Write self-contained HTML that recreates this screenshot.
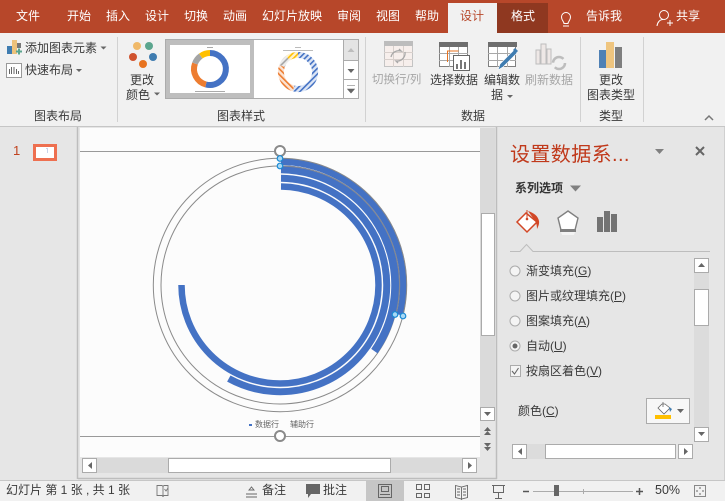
<!DOCTYPE html>
<html lang="zh">
<head>
<meta charset="utf-8">
<style>
html,body{margin:0;padding:0;}
body{width:725px;height:501px;overflow:hidden;position:relative;background:#E6E6E6;font-family:"Liberation Sans","Noto Sans CJK SC",sans-serif;font-size:12px;color:#333;}
.t{position:absolute;white-space:nowrap;line-height:16px;height:16px;}
.w{color:#fff;}
.g{color:#A6A6A6;}
.l{color:#3A3A3A;}
u{text-underline-offset:1px;}
svg{position:absolute;left:0;top:0;}
</style>
</head>
<body>
<svg width="725" height="501" viewBox="0 0 725 501">
<defs>
<pattern id="h1" width="4" height="4" patternUnits="userSpaceOnUse" patternTransform="rotate(45)"><rect width="4" height="4" fill="#DCE5F5"/><rect width="1.600" height="4" fill="#4472C4"/></pattern>
<pattern id="h2" width="4" height="4" patternUnits="userSpaceOnUse" patternTransform="rotate(-45)"><rect width="4" height="4" fill="#FBE3D3"/><rect width="1.600" height="4" fill="#ED7D31"/></pattern>
<pattern id="h3" width="4" height="4" patternUnits="userSpaceOnUse" patternTransform="rotate(45)"><rect width="4" height="4" fill="#EDEDED"/><rect width="1.600" height="4" fill="#A5A5A5"/></pattern>
<pattern id="h4" width="4" height="4" patternUnits="userSpaceOnUse" patternTransform="rotate(45)"><rect width="4" height="4" fill="#FFF2CC"/><rect width="1.600" height="4" fill="#FFC000"/></pattern>
</defs>
<!-- title bar -->
<rect width="725" height="33" fill="#B7472A"/>
<rect x="448" y="3" width="49" height="30" fill="#F1F1F1"/>
<rect x="497" y="3" width="51" height="30" fill="#8F3820"/>
<!-- bulb -->
<path d="M563 26h6M564 23.500c0-2-2.500-3-2.500-6.500a4.500 4.500 0 0 1 9 0c0 3.500-2.500 4.500-2.500 6.500z" fill="none" stroke="#fff" stroke-width="1"/>
<!-- person -->
<circle cx="664" cy="15" r="4.500" fill="none" stroke="#fff"/>
<path d="M657 26c.5-4 3-6.500 6-6.500M667 23h6M670 20v6" fill="none" stroke="#fff"/>
<!-- ribbon -->
<rect y="33" width="725" height="93" fill="#F1F1F1"/>
<rect y="126" width="725" height="1" fill="#C6C6C6"/>
<g stroke="#D2D2D2"><path d="M117.500 37v85M365.500 37v85M580.500 37v85M643.500 37v85"/></g>
<!-- add element icon -->
<rect x="7" y="46" width="5" height="8" fill="#3F7CB0"/>
<rect x="12" y="40" width="5" height="14" fill="#EDC27B"/>
<rect x="17" y="43" width="4" height="5" fill="#777"/>
<path d="M16 51.500h6M19 48.500v6" stroke="#5BA58E" stroke-width="2"/>
<!-- quick layout icon -->
<rect x="6.500" y="63.500" width="15" height="14" fill="#fff" stroke="#999"/>
<path d="M9.500 74v-5M11.500 74v-7M14 74v-7M16.500 74v-5M18.500 74v-3" stroke="#666"/>
<path d="M100.500 46.500h6l-3 3zM76 69h6l-3 3zM154 92.500h6l-3 3zM507 95h6l-3 3z" fill="#666"/>
<!-- colors -->
<circle cx="137" cy="46" r="4" fill="#F0B969"/><circle cx="149" cy="46" r="4" fill="#5BA58E"/>
<circle cx="133" cy="57" r="4" fill="#D0532F"/><circle cx="153" cy="57" r="4" fill="#3F7CB0"/>
<circle cx="143" cy="64" r="4" fill="#E8731F"/>
<!-- gallery -->
<rect x="165.500" y="39.500" width="193" height="59" fill="#fff" stroke="#ABABAB"/>
<rect x="166" y="40" width="88" height="58" fill="#BEBEBE"/>
<rect x="170" y="45" width="80" height="48" fill="#fff"/>
<g fill="none" stroke-width="6">
<path d="M210 53A16 16 0 1 1 205.900 84.500" stroke="#4472C4"/>
<path d="M205.900 84.500A16 16 0 0 1 195 63.500" stroke="#ED7D31"/>
<path d="M195 63.500A16 16 0 0 1 200.800 56" stroke="#A5A5A5"/>
<path d="M200.800 56A16 16 0 0 1 210 53" stroke="#FFC000"/>
</g>
<g stroke="#AAA" stroke-width="1"><path d="M207 47.500h6M195 91.500h30"/></g>
<g fill="none" stroke-width="6">
<path d="M298 55A17 17 0 1 1 293.600 88.400" stroke="url(#h1)"/>
<path d="M293.600 88.400A17 17 0 0 1 282 66" stroke="url(#h2)"/>
<path d="M282 66A17 17 0 0 1 288 58" stroke="url(#h3)"/>
<path d="M288 58A17 17 0 0 1 298 55" stroke="url(#h4)"/>
</g>
<g stroke="#BBB"><path d="M295 47.500h6M283 50.500h30"/></g>
<rect x="344" y="40" width="14" height="21" fill="#E4E4E4"/>
<path d="M343.500 39v60M344 60.500h14M344 79.500h14" stroke="#ABABAB"/>
<path d="M347.500 52l3.500-4 3.500 4z" fill="#BDBDBD"/>
<path d="M347.500 69h7l-3.500 4z" fill="#666"/>
<path d="M347 85.500h8M347.500 89h7l-3.500 4z" fill="#666" stroke="#666" stroke-width=".6"/>
<!-- switch row/col -->
<rect x="384.500" y="42.500" width="28" height="24" fill="#F7EFEC" stroke="#C4C4C4"/>
<rect x="384" y="41" width="29" height="5" fill="#BDBDBD"/>
<path d="M384 52.500h29M384 59.500h29M393.500 46v21M403.500 46v21" stroke="#D8D0CC"/>
<path d="M391 57a8 8 0 0 1 10-6l-2-2M405 52a8 8 0 0 1-9 9l2 2" fill="none" stroke="#A8A8A8" stroke-width="1.300"/>
<!-- select data -->
<rect x="439.500" y="43.500" width="28" height="23" fill="#fff" stroke="#808080"/>
<rect x="439" y="42" width="29" height="5" fill="#6E6E6E"/>
<path d="M439 53.500h29M439 60.500h29M449.500 47v20M458.500 47v20" stroke="#A8A8A8"/>
<path d="M447.500 62v-11h11" fill="none" stroke="#E8731F"/>
<rect x="453.500" y="55.500" width="16" height="15" fill="#fff" stroke="#666"/>
<path d="M456 69v-5h2v5zM460 69v-9h2v9zM464 69v-7h2v7z" fill="#777"/>
<!-- edit data -->
<rect x="488.500" y="43.500" width="27" height="23" fill="#fff" stroke="#808080"/>
<rect x="488" y="42" width="29" height="5" fill="#6E6E6E"/>
<path d="M488 53.500h28M488 60.500h28M497.500 47v20M507.500 47v20" stroke="#A8A8A8"/>
<path d="M498 70l2-6 14-14 3 3-14 14z" fill="#3F7CB0" stroke="#fff" stroke-width=".6"/>
<path d="M513 50l2-2 3 3-2 2z" fill="#3F7CB0"/>
<!-- refresh -->
<path d="M536 64V50h4v14zM541 64V44h5v20zM547 64V49h4v15z" fill="#EEE8E6" stroke="#BDBDBD"/>
<circle cx="559" cy="63" r="6" fill="none" stroke="#BDBDBD" stroke-width="2.500" stroke-dasharray="14 5"/>
<!-- change chart type -->
<rect x="599" y="50" width="7" height="18" fill="#4F81B5"/>
<rect x="606" y="42" width="8" height="26" fill="#EFC57F"/>
<rect x="615" y="47" width="7" height="21" fill="#7F7F7F"/>
<path d="M705 120l4-4 4 4" fill="none" stroke="#777" stroke-width="1.500"/>
<!-- left pane / frame -->
<rect y="127" width="78" height="354" fill="#E6E6E6"/>
<rect x="34.500" y="145.500" width="21" height="14" fill="#fff" stroke="#EE7050" stroke-width="3"/>
<path d="M46 148h2v5h-1v-4h-1z" fill="#C8D4EA"/>
<rect x="78" y="127" width="419" height="352" fill="#E6E6E6"/>
<path d="M77.500 127v352M78 478.500h419M496.500 127v352" stroke="#BDBDBD" stroke-width="1.500" fill="none"/>
<rect x="80" y="128" width="400" height="329" fill="#FCFCFC"/>
<!-- chart -->
<path d="M80 151.500h400M80 436.500h400" stroke="#999"/>
<circle cx="280" cy="285" r="119" fill="none" stroke="#8A8A8A"/>
<g fill="none" stroke="#4472C4">
<path d="M281 161.500A123.500 123.500 0 0 1 399.800 314.900" stroke-width="7"/>
<path d="M281 169.300A115.700 115.700 0 0 1 374.400 351.100" stroke-width="7.800"/>
<path d="M281 178.300A106.700 106.700 0 1 1 228.800 378.600" stroke-width="7"/>
<path d="M281 186.500A98.500 98.500 0 1 1 181.500 285" stroke-width="6.500"/>
</g>
<circle cx="280" cy="285" r="126.700" fill="none" stroke="#8A8A8A"/>
<path d="M281 166A119 119 0 0 1 396 314" fill="none" stroke="#838894" stroke-width="1.200"/>
<circle cx="280" cy="151" r="5" fill="#fff" stroke="#8A8A8A" stroke-width="2"/>
<circle cx="280" cy="436" r="5" fill="#fff" stroke="#8A8A8A" stroke-width="2"/>
<g fill="#A8D8F5" stroke="#1A8AD4" stroke-width="1.200">
<circle cx="280" cy="158.500" r="2.800"/><circle cx="280" cy="166" r="2.800"/>
<circle cx="395" cy="314.500" r="2.800"/><circle cx="403" cy="316" r="2.800"/>
</g>
<rect x="249" y="424" width="3" height="2" fill="#4472C4"/>
<!-- editor scrollbars -->
<rect x="480" y="128" width="15" height="279" fill="#DADADA"/>
<rect x="481.500" y="213.500" width="13" height="122" fill="#fff" stroke="#ABABAB"/>
<rect x="480.500" y="407.500" width="14" height="13" fill="#fff" stroke="#ABABAB"/>
<path d="M484 412h7l-3.500 4z" fill="#666"/>
<path d="M484 431l3.500-4 3.500 4zM484 435l3.500-4 3.500 4zM484 443h7l-3.500 4zM484 447h7l-3.500 4z" fill="#666"/>
<rect x="82" y="458" width="395" height="15" fill="#DADADA"/>
<rect x="82.500" y="458.500" width="14" height="14" fill="#fff" stroke="#ABABAB"/>
<path d="M92 462v7l-4-3.500z" fill="#666"/>
<rect x="168.500" y="458.500" width="222" height="14" fill="#fff" stroke="#ABABAB"/>
<rect x="462.500" y="458.500" width="14" height="14" fill="#fff" stroke="#ABABAB"/>
<path d="M468 462v7l4-3.500z" fill="#666"/>
<!-- panel -->
<path d="M655 149h9l-4.500 5z" fill="#808080"/>
<path d="M696 147l8 8M704 147l-8 8" stroke="#666" stroke-width="2"/>
<path d="M570 185.500h11l-5.500 6z" fill="#808080"/>
<!-- fill icon -->
<path d="M526 213l-9 9 10 10 10-10z" fill="#fff" stroke="#D24726" stroke-width="1.500"/>
<path d="M527 210v9" stroke="#D24726"/><circle cx="527" cy="219" r="1.300" fill="#D24726"/>
<path d="M528 211c6 2 10 5 11 10 .5 3-1 6-2 8 0-4-1-8-4-11z" fill="#D24726"/>
<!-- pentagon icon -->
<path d="M568 211l10 7-3 12h-14l-3-12z" fill="#fff" stroke="#808080" stroke-width="1.400"/>
<rect x="560" y="229" width="16" height="3" fill="#808080"/>
<path d="M561 232h14l-1 3h-12z" fill="#F4F4F4"/>
<!-- bars icon -->
<rect x="597" y="217" width="6" height="15" fill="#737373"/>
<rect x="604" y="211" width="6" height="21" fill="#737373"/>
<rect x="611" y="214" width="6" height="18" fill="#737373"/>
<path d="M510 251.500h10l6.500-7 6.500 7h177" fill="none" stroke="#BDBDBD"/>
<!-- radios -->
<g fill="#F4F4F4" stroke="#ABABAB"><circle cx="515" cy="271" r="5"/><circle cx="515" cy="296" r="5"/><circle cx="515" cy="321" r="5"/><circle cx="515" cy="346" r="5"/></g>
<circle cx="515" cy="346" r="2.500" fill="#666"/>
<rect x="510.500" y="365.500" width="10" height="11" fill="#F4F4F4" stroke="#ABABAB"/>
<path d="M512 371l2.500 3 4-6" fill="none" stroke="#666" stroke-width="1.100"/>
<!-- colour button -->
<rect x="646.500" y="398.500" width="43" height="25" fill="#F7F7F7" stroke="#ABABAB"/>
<path d="M662 404l-4 4 6 6 6-6-5-4zM663 402v5" fill="#fff" stroke="#666" stroke-width=".8"/>
<path d="M669 407l3 2-2 3z" fill="#3F7CB0"/>
<rect x="655" y="415" width="16" height="4" fill="#FFC000"/>
<path d="M677 409h7l-3.500 4z" fill="#666"/>
<!-- panel scrollbars -->
<rect x="694" y="258" width="15" height="183" fill="#DCDCDC"/>
<rect x="694.500" y="258.500" width="14" height="14" fill="#fff" stroke="#ABABAB"/>
<path d="M698 267l3.500-4 3.500 4z" fill="#666"/>
<rect x="694.500" y="289.500" width="14" height="36" fill="#fff" stroke="#ABABAB"/>
<rect x="694.500" y="427.500" width="14" height="14" fill="#fff" stroke="#ABABAB"/>
<path d="M698 432h7l-3.500 4z" fill="#666"/>
<rect x="512.500" y="444.500" width="14" height="14" fill="#fff" stroke="#ABABAB"/>
<path d="M522 448v7l-4-3.500z" fill="#666"/>
<rect x="527" y="444" width="18" height="15" fill="#DCDCDC"/>
<rect x="545.500" y="444.500" width="130" height="14" fill="#fff" stroke="#ABABAB"/>
<rect x="678.500" y="444.500" width="14" height="14" fill="#fff" stroke="#ABABAB"/>
<path d="M684 448v7l4-3.500z" fill="#666"/>
<path d="M724.500 127v354" stroke="#D0D0D0"/>
<!-- status -->
<rect y="481" width="725" height="20" fill="#F1F1F1"/>
<rect y="480" width="725" height="1" fill="#C6C6C6"/>
<rect x="366" y="481" width="38" height="20" fill="#C6C6C6"/>
<path d="M162 485.500h-5v10h5l1 1 1-1h4v-10h-4l-1 1zM163 486v10M164.500 489l1.500 2 2-3" fill="none" stroke="#777" stroke-width=".9"/>
<path d="M246 494h11M246 497h11M249 490l2.500-3 2.500 3z" fill="none" stroke="#666" stroke-width=".9"/>
<path d="M306 484h14v10h-9l-3 4v-4h-2z" fill="#666"/>
<rect x="378.500" y="484.500" width="13" height="13" fill="none" stroke="#666"/>
<rect x="381.500" y="486.500" width="7" height="5" fill="none" stroke="#666"/>
<path d="M380 494.500h10" stroke="#666"/>
<g fill="none" stroke="#666"><rect x="416.500" y="484.500" width="5" height="5"/><rect x="424.500" y="484.500" width="5" height="5"/><rect x="416.500" y="493.500" width="5" height="4"/><rect x="424.500" y="493.500" width="5" height="4"/></g>
<path d="M455.500 485.500l6 1.500 6-1.500v12l-6 1.500-6-1.500zM461.500 487v13M457 489h3M457 492h3M457 495h3M463 489h3M463 492h3M463 495h3" fill="none" stroke="#666" stroke-width=".9"/>
<path d="M492 485.500h13M493.500 485.500v7h10v-7M498.500 492.500v6M495 498.500h7" fill="none" stroke="#666"/>
<path d="M523 491.500h6M636 491.500h7M639.500 488v7" stroke="#555" stroke-width="1.500"/>
<path d="M533 491.500h100M583.500 489v5" stroke="#ABABAB"/>
<rect x="554" y="485" width="5" height="11" fill="#666"/>
<rect x="694.500" y="485.500" width="11" height="11" fill="none" stroke="#888"/>
<path d="M700 487v2M700 493v2M696 491h2M702 491h2" stroke="#666"/>
</svg>

<span class="t w" style="left:16px;top:8px;">文件</span>
<span class="t w" style="left:67px;top:8px;">开始</span>
<span class="t w" style="left:106px;top:8px;">插入</span>
<span class="t w" style="left:145px;top:8px;">设计</span>
<span class="t w" style="left:184px;top:8px;">切换</span>
<span class="t w" style="left:223px;top:8px;">动画</span>
<span class="t w" style="left:262px;top:8px;">幻灯片放映</span>
<span class="t w" style="left:337px;top:8px;">审阅</span>
<span class="t w" style="left:376px;top:8px;">视图</span>
<span class="t w" style="left:415px;top:8px;">帮助</span>
<span class="t" style="left:460px;top:8px;color:#B7472A;">设计</span>
<span class="t w" style="left:511px;top:8px;">格式</span>
<span class="t w" style="left:586px;top:8px;">告诉我</span>
<span class="t w" style="left:676px;top:8px;">共享</span>

<span class="t l" style="left:25px;top:40px;">添加图表元素</span>
<span class="t l" style="left:25px;top:62px;">快速布局</span>
<span class="t l" style="left:130px;top:72px;">更改</span>
<span class="t l" style="left:126px;top:87px;">颜色</span>
<span class="t g" style="left:372px;top:72px;font-size:11.500px;">切换行/列</span>
<span class="t l" style="left:430px;top:72px;">选择数据</span>
<span class="t l" style="left:484px;top:72px;">编辑数</span>
<span class="t l" style="left:491px;top:87px;">据</span>
<span class="t g" style="left:525px;top:72px;">刷新数据</span>
<span class="t l" style="left:599px;top:72px;">更改</span>
<span class="t l" style="left:587px;top:87px;">图表类型</span>
<span class="t l" style="left:34px;top:108px;">图表布局</span>
<span class="t l" style="left:217px;top:108px;">图表样式</span>
<span class="t l" style="left:461px;top:108px;">数据</span>
<span class="t l" style="left:599px;top:108px;">类型</span>

<span class="t" style="left:13px;top:143px;color:#C0431F;font-size:13px;">1</span>
<span class="t" style="left:255px;top:417px;font-size:8px;color:#666;">数据行</span>
<span class="t" style="left:290px;top:417px;font-size:8px;color:#666;">辅助行</span>

<span class="t" style="left:510px;top:145px;font-size:20px;line-height:20px;height:20px;letter-spacing:.4px;color:#C0391B;">设置数据系...</span>
<span class="t" style="left:515px;top:180px;font-weight:bold;color:#333;">系列选项</span>
<span class="t l" style="left:526px;top:263px;">渐变填充(<u>G</u>)</span>
<span class="t l" style="left:526px;top:288px;">图片或纹理填充(<u>P</u>)</span>
<span class="t l" style="left:526px;top:313px;">图案填充(<u>A</u>)</span>
<span class="t l" style="left:526px;top:338px;">自动(<u>U</u>)</span>
<span class="t l" style="left:526px;top:363px;">按扇区着色(<u>V</u>)</span>
<span class="t l" style="left:518px;top:403px;">颜色(<u>C</u>)</span>

<span class="t l" style="left:6px;top:482px;">幻灯片 第 1 张 , 共 1 张</span>
<span class="t l" style="left:262px;top:482px;">备注</span>
<span class="t l" style="left:323px;top:482px;">批注</span>
<span class="t l" style="left:655px;top:482px;font-size:12.500px;">50%</span>
</body>
</html>
